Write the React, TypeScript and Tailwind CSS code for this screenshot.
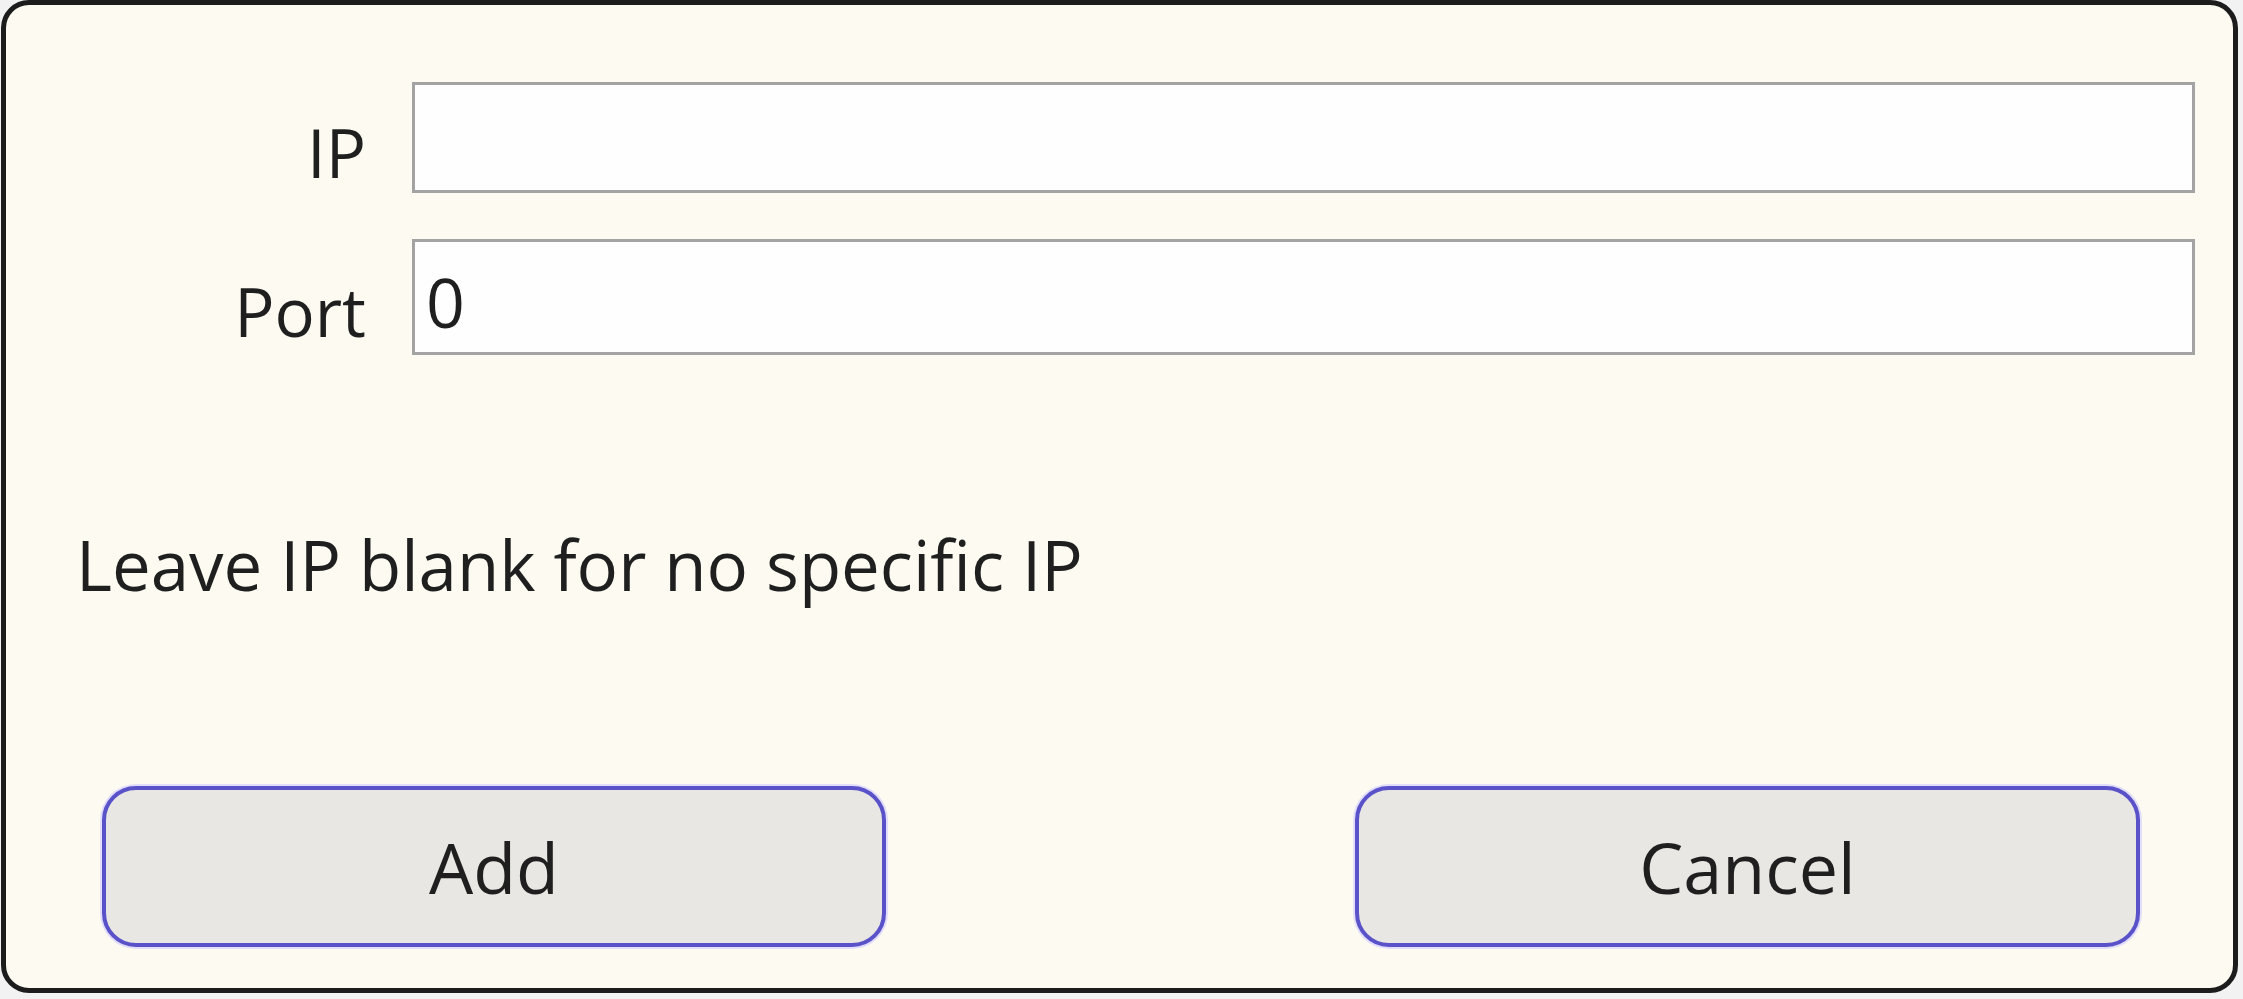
import React from 'react';

const font = { fontFamily: '"Open Sans", "Noto Sans", sans-serif' };

const Field: React.FC<{ label: string; value?: string; labelGap: string; height: string }> = ({
  label,
  value,
  labelGap,
  height,
}) => (
  <>
    <label className={`self-end text-right text-[67px] leading-none text-[#1f1f1f] ${labelGap}`}>{label}</label>
    <input
      readOnly
      value={value ?? ''}
      className={`w-full ${height} border-[3px] border-[#a3a3a3] bg-[#fefefe] pl-[11px] pt-[8px] text-[68px] leading-none text-[#1f1f1f] outline-none`}
      style={font}
    />
  </>
);

export default function App() {
  return (
    <div className="w-[2243px] h-[999px] bg-[#f2f2f2] overflow-hidden" style={font}>
      <div className="ml-[1px] w-[2237px] h-[993px] flex flex-col bg-[#fdfaf1] border-[5px] border-[#1c1c1c] rounded-[28px]">
        {/* Fields */}
        <div className="grid grid-cols-[360px_1fr] gap-x-[46px] gap-y-[46px] pt-[77px] pr-[38px]">
          <Field label="IP" labelGap="mb-[7px]" height="h-[111px]" />
          <Field label="Port" value="0" labelGap="mb-[10px]" height="h-[116px]" />
        </div>

        <p className="pl-[70px] mt-[175px] text-[69px] leading-none text-[#1f1f1f]">
          Leave IP blank for no specific IP
        </p>

        {/* Buttons */}
        <div className="mt-auto flex justify-between pl-[96px] pr-[93px] pb-[41px]">
          <button className="w-[784px] h-[161px] rounded-[34px] border-[4px] border-[#5a52c8] bg-[#e9e7e3] shadow-[0_0_0_2px_#e2ddfb] text-[70px] leading-none text-[#1f1f1f]">
            Add
          </button>
          <button className="w-[785px] h-[161px] rounded-[34px] border-[4px] border-[#5a52c8] bg-[#e9e7e3] shadow-[0_0_0_2px_#e2ddfb] text-[70px] leading-none text-[#1f1f1f]">
            Cancel
          </button>
        </div>
      </div>
    </div>
  );
}
